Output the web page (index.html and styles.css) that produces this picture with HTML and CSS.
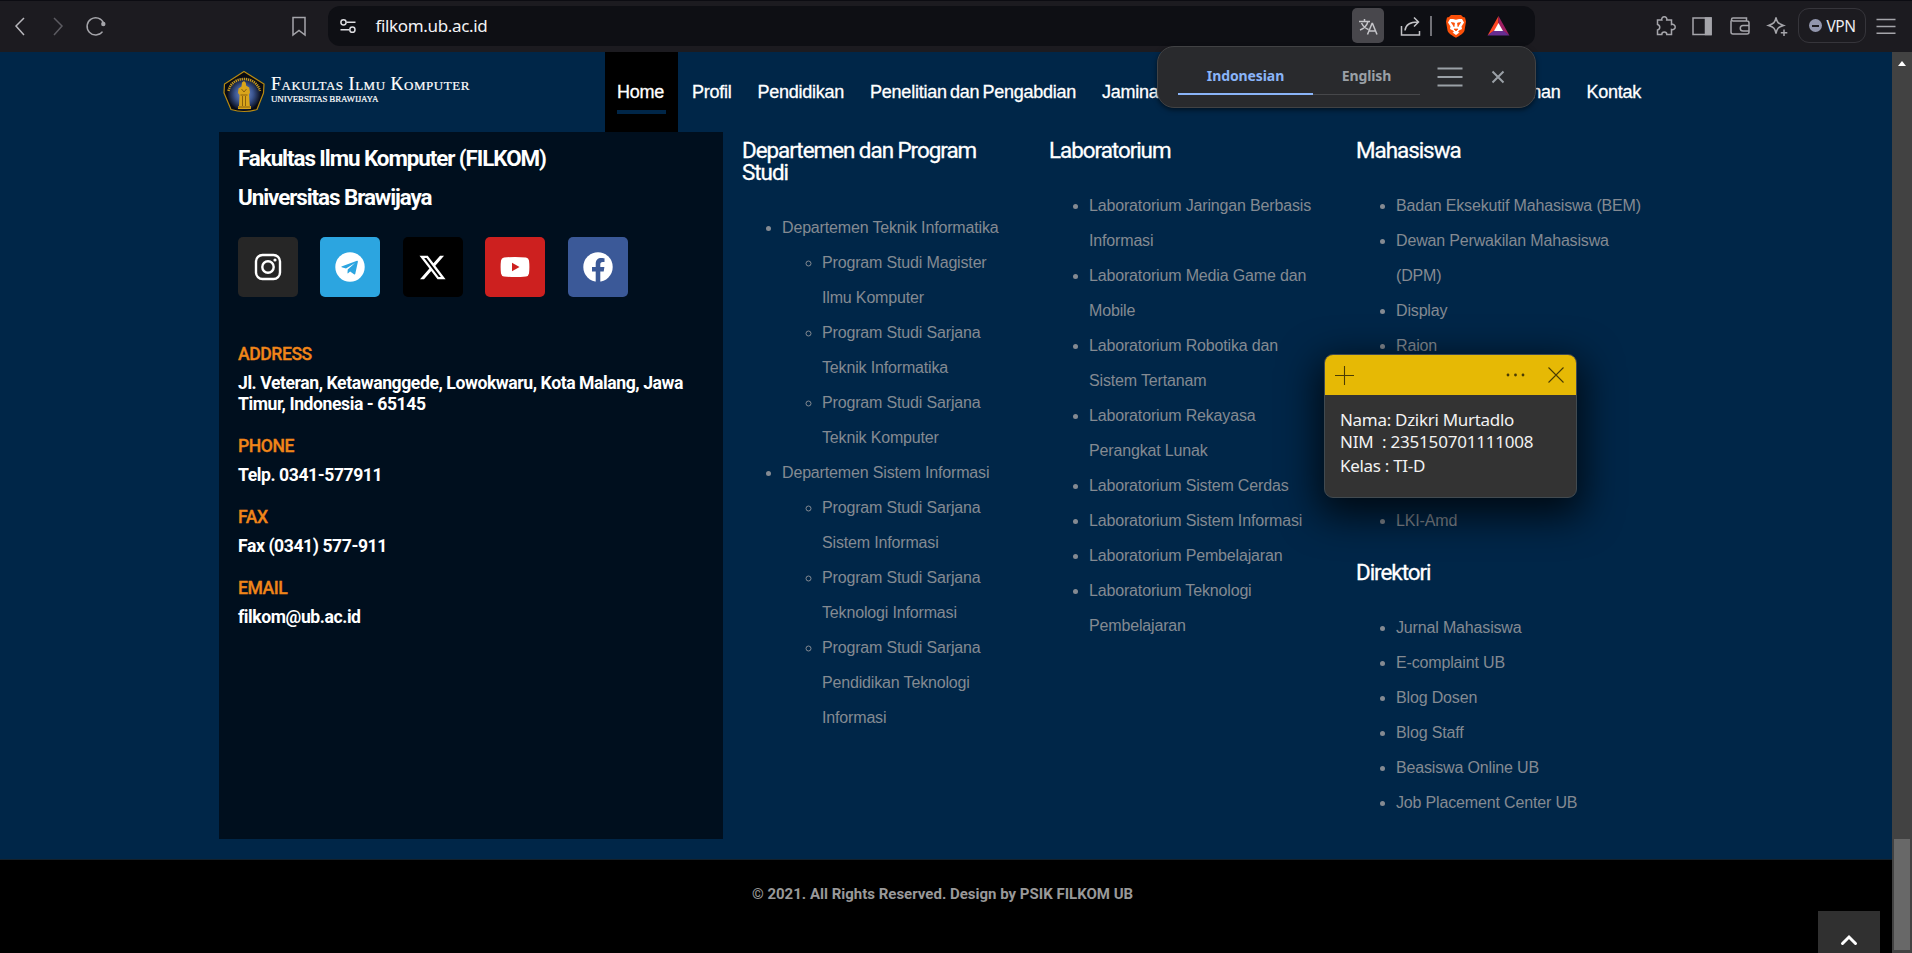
FILE: index.html
```html
<!DOCTYPE html>
<html lang="id">
<head>
<meta charset="utf-8">
<title>Fakultas Ilmu Komputer</title>
<link rel="stylesheet" href="styles.css">
</head>
<body>
<div class="toolbar">
  <svg class="ico back" viewBox="0 0 24 24"><path d="M16 4 8 12l8 9"/></svg>
  <svg class="ico forward" viewBox="0 0 24 24"><path d="M8 4l8 8-8 9"/></svg>
  <svg class="ico reload" viewBox="0 0 24 24"><path d="M19.6 9A8.6 8.6 0 1 0 18.5 17.6"/><circle cx="19.3" cy="10" r="2.2" fill="currentColor" stroke="none"/></svg>
  <svg class="ico bookmark" viewBox="0 0 24 24"><path d="M6 3.5h12V21l-6-4.5L6 21z"/></svg>
  <div class="address">
    <svg class="ico site" viewBox="0 0 24 24"><circle cx="7.5" cy="8.3" r="2.6"/><path d="M10.500 8.300h9M4.500 15.700h8.500"/><circle cx="16.400" cy="15.700" r="2.6"/></svg>
    <span class="url">filkom.ub.ac.id</span>
    <span class="translate"><svg class="ico" viewBox="0 0 24 24"><path d="M3 7.500h11M8.500 5v2.500M12 7.500C11 11 8 14.500 4 16M5.500 9c1.500 3 4 5.500 7 6.500M11.500 20.500 16 9.500h.5l4.500 11M13 17h6.500"/></svg></span>
    <svg class="ico share" viewBox="0 0 24 24"><path d="M2.500 12v9h18v-4M6 16.500C6.500 11 10 8 19 8M15 3.500 19.500 8 15 12.500"/></svg>
    <span class="divider"></span>
    <svg class="brave" viewBox="0 0 22 24"><path fill="#fb5009" d="M6 1h10l2 2 2 .5 1 4-1.500 9c-.5 2.500-5 5.500-8.500 7.300C7.500 22 3 19 2.500 16.500L1 7.500l1-4L4 3z"/><path fill="#fff" d="M5 5h3l3 .7L14 5h3l2 3.500-2.500 4L17 15l-3 1.500-1 1.500 1.500.5L11 21l-3.500-2.500L9 18l-1-1.500L5 15l.5-2.500L3 8.500z"/><path d="M6 8.500 9.500 9 9 13M16 8.500l-3.500.5.500 4M9 15h4l-2 2z" fill="#fb5009" stroke="#fb5009" stroke-width=".7"/></svg>
    <svg class="bat" viewBox="0 0 22 20"><path fill="#ff4724" d="M11 0 0 19.500 8 14l3-6z"/><path fill="#9e1f63" d="M11 0v8l3.500 6.500 7.500 5z"/><path fill="#662d91" d="M0 19.500 7 14h8l7 5.500z"/><path fill="#fff" d="M11 7l4.500 8h-9z"/></svg>
  </div>
  <svg class="ico ext" viewBox="0 0 24 24"><path d="M4.500 6h4.300a2.600 2.600 0 1 1 5 0H18.500v4.500a2.700 2.700 0 1 1 0 5V20.500h-4.700a2.500 2.500 0 0 0-5 0H4.500v-4.500a2.800 2.800 0 0 0 0-5.500z"/></svg>
  <svg class="ico" viewBox="0 0 24 24"><path d="M3 4h18v16.500H3z"/><path fill="currentColor" d="M15.500 4H21v16.500h-5.500z"/></svg>
  <svg class="ico" viewBox="0 0 24 24"><path d="M3 6.500V18a2 2 0 0 0 2 2h14a2 2 0 0 0 2-2V9a2 2 0 0 0-2-2H5A1.500 1.500 0 0 1 5 4h13.500v3M21 11.500h-6a2.500 2.500 0 0 0 0 5.500h6"/></svg>
  <svg class="ico" viewBox="0 0 24 24"><path d="M11 3.500c1 5 2 6 7.500 8-5.500 1.500-6.500 3-7.500 8-1-5-2-6.500-7.500-8 5.500-2 6.500-3 7.500-8zM19 15.500v6.500M15.800 18.700h6.500"/></svg>
  <span class="vpn"><i></i>VPN</span>
  <svg class="ico menu" viewBox="0 0 24 24"><path d="M2.500 5.500h19M2.500 12.500h19M2.500 19.200h19"/></svg>
</div>

<div class="window">
<div class="page">
  <header class="header">
    <svg class="logo" viewBox="0 0 44 44">
      <defs><radialGradient id="shield"><stop offset="0" stop-color="#7d98d6"/><stop offset=".55" stop-color="#3b558f"/><stop offset="1" stop-color="#0b1020"/></radialGradient></defs>
      <path d="M22 1.500 42 14l-.5 9L35 39.500Q22 43.500 9 39.500L2 23l.5-9z" fill="#090b12" stroke="#b78a12" stroke-width="1.200"/>
      <circle cx="22" cy="24" r="16.500" fill="url(#shield)"/>
      <path d="M6.500 21C8 13 15 9 22 9S36 13 38 21" fill="none" stroke="#c79a1c" stroke-width="2.500" stroke-dasharray="1.300 .8"/>
      <path d="M22 11l1.800 1.800.4 3 3 1.800.8 5-1 2 .5 7 .4 4.400h1v3H16v-3h1l.6-11-1.600-2 .5-4.500 3-2 .5-4z" fill="#d9a51b"/>
      <path d="M19.500 19l2.500 3 2.500-3M18.500 25h7M20.500 26v10M23.500 26v10M16 37h12" stroke="#80580c" stroke-width=".9" fill="none"/>
    </svg>
    <div class="brand"><span class="brand-name">Fakultas Ilmu Komputer</span><span class="brand-sub">UNIVERSITAS BRAWIJAYA</span></div>
    <nav class="nav">
      <a class="active"><span>Home</span></a><a>Profil</a><a>Pendidikan</a><a>Penelitian dan Pengabdian</a><a>Jaminan</a><a class="push">Layanan</a><a>Kontak</a>
    </nav>
  </header>

  <main class="columns">
    <section class="contact">
      <h2>Fakultas Ilmu Komputer (FILKOM)</h2>
      <h2>Universitas Brawijaya</h2>
      <div class="social">
        <a class="instagram"><svg viewBox="0 0 30 30"><rect x="3" y="3" width="24" height="24" rx="6.500"/><circle cx="15" cy="15" r="5.700"/><circle cx="22" cy="8" r="1.600" fill="#fff" stroke="none"/></svg></a>
        <a class="telegram"><svg viewBox="0 0 30 30"><circle cx="15" cy="15" r="14.700" fill="#fff" stroke="none"/><path fill="#2ca5e0" stroke="none" d="M6.500 14.600 22 8.700q1-.2.900 1L20.300 21.800q-.3 1-1.300.5l-3.900-2.900-2 1.900q-.5.400-.6-.3l.2-3.500 7.300-6.500-9 5.600-4.300-1.300q-.7-.4-.2-.7z"/></svg></a>
        <a class="x"><svg viewBox="0 0 24 24"><path fill="#fff" stroke="none" d="M18.244 2.250h3.308l-7.227 8.260 8.502 11.240H16.170l-5.214-6.817L4.990 21.750H1.680l7.730-8.835L1.254 2.250H8.080l4.713 6.231zm-1.161 17.520h1.833L7.084 4.126H5.117z"/></svg></a>
        <a class="youtube"><svg viewBox="0 0 30 30"><path fill="#fff" stroke="none" d="M4 5.600Q15 4.400 26 5.600q2.500.4 3 3 .8 6.400 0 12.800-.5 2.600-3 3Q15 25.600 4 24.400q-2.500-.4-3-3-.8-6.400 0-12.800.5-2.600 3-3z"/><path fill="#cd201f" stroke="none" d="M12 10.700v8.600l7.500-4.300z"/></svg></a>
        <a class="facebook"><svg viewBox="0 0 30 30"><circle cx="15" cy="15" r="14.700" fill="#fff" stroke="none"/><path fill="#3b5998" stroke="none" d="M12.700 30V19.400H9V15h3.700v-3.200c0-3.800 2.200-5.800 5.600-5.800 1.600 0 3.200.3 3.200.3v3.600h-1.800c-1.800 0-2.400 1.100-2.400 2.300V15h4.100l-.7 4.400h-3.400V30z"/></svg></a>
      </div>
      <h3>ADDRESS</h3><p>Jl. Veteran, Ketawanggede, Lowokwaru, Kota Malang, Jawa Timur, Indonesia - 65145</p>
      <h3>PHONE</h3><p>Telp. 0341-577911</p>
      <h3>FAX</h3><p>Fax (0341) 577-911</p>
      <h3>EMAIL</h3><p>filkom@ub.ac.id</p>
    </section>

    <section class="links">
      <h4>Departemen dan Program<br>Studi</h4>
      <ul>
        <li>Departemen Teknik Informatika
          <ul><li>Program Studi Magister<br>Ilmu Komputer</li><li>Program Studi Sarjana<br>Teknik Informatika</li><li>Program Studi Sarjana<br>Teknik Komputer</li></ul></li>
        <li>Departemen Sistem Informasi
          <ul><li>Program Studi Sarjana<br>Sistem Informasi</li><li>Program Studi Sarjana<br>Teknologi Informasi</li><li>Program Studi Sarjana<br>Pendidikan Teknologi<br>Informasi</li></ul></li>
      </ul>
    </section>

    <section class="links">
      <h4>Laboratorium</h4>
      <ul>
        <li>Laboratorium Jaringan Berbasis<br>Informasi</li><li>Laboratorium Media Game dan<br>Mobile</li><li>Laboratorium Robotika dan<br>Sistem Tertanam</li><li>Laboratorium Rekayasa<br>Perangkat Lunak</li><li>Laboratorium Sistem Cerdas</li><li>Laboratorium Sistem Informasi</li><li>Laboratorium Pembelajaran</li><li>Laboratorium Teknologi<br>Pembelajaran</li>
      </ul>
    </section>

    <section class="links">
      <h4>Mahasiswa</h4>
      <ul>
        <li>Badan Eksekutif Mahasiswa (BEM)</li><li>Dewan Perwakilan Mahasiswa<br>(DPM)</li><li>Display</li><li>Raion</li><li></li><li></li><li></li><li></li><li>LKI-Amd</li>
      </ul>
      <h4>Direktori</h4>
      <ul>
        <li>Jurnal Mahasiswa</li><li>E-complaint UB</li><li>Blog Dosen</li><li>Blog Staff</li><li>Beasiswa Online UB</li><li>Job Placement Center UB</li>
      </ul>
    </section>
  </main>

  <footer class="footer">© 2021. All Rights Reserved. Design by PSIK FILKOM UB</footer>
  <a class="to-top"><svg viewBox="0 0 18 12"><path d="M2.500 9.500 9 3l6.500 6.500"/></svg></a>
</div>
<div class="scrollbar"><span class="arrow"></span><span class="thumb"></span></div>
</div>

<div class="popup">
  <span class="tab selected">Indonesian</span><span class="tab">English</span>
  <svg class="popup-menu" viewBox="0 0 26 20"><path d="M.5 1.500h25M.5 10h25M.5 18.500h25"/></svg>
  <svg class="popup-close" viewBox="0 0 14 14"><path d="M1.500 1.500l11 11M12.500 1.500l-11 11"/></svg>
</div>

<div class="note">
  <div class="note-bar">
    <svg class="plus" viewBox="0 0 19 19"><path d="M9.500 0v19M0 9.500h19"/></svg>
    <svg class="dots" viewBox="0 0 20 4"><circle cx="2" cy="2" r="1.400"/><circle cx="9.500" cy="2" r="1.400"/><circle cx="17" cy="2" r="1.400"/></svg>
    <svg class="close" viewBox="0 0 16 16"><path d="M.5.500l15 15M15.500.500l-15 15"/></svg>
  </div>
  <div class="note-body"><div class="n1">Nama: Dzikri Murtadlo</div><div class="n2">NIM&nbsp; : 235150701111008</div><div class="n3">Kelas : TI-D</div></div>
</div>
</body>
</html>
```
FILE: styles.css
```css
* { box-sizing: border-box; }
html, body { margin: 0; height: 953px; overflow: hidden; }
body { background: #000; font-family: "Liberation Sans", Arial, sans-serif; position: relative; }
h2, h3, h4, p, ul { margin: 0; padding: 0; }
svg { display: block; flex: none; fill: none; }

/* browser toolbar */
.toolbar { height: 52px; background: #1c1b20; border-top: 1px solid #0c0c12; display: flex; align-items: center; padding: 0 0 2px 8px; }
.ico { width: 24px; height: 24px; color: #a5a5aa; stroke: currentColor; stroke-width: 1.5; margin-right: 13.5px; flex: none; }
.forward { color: #5c5b61; }
.back { color: #b8b7bc; margin-right: 14px; }
.reload { margin-right: 179.500px; }
.bookmark { margin-right: 16.500px; }
.address { width: 1207px; height: 40px; flex: none; border-radius: 12px; background: #0e0f14; display: flex; align-items: center; padding-left: 8px; }
.site { color: #dcdce0; margin: 0 16px 0 0; }
.url { font: 17px/24px "Noto Sans", sans-serif; letter-spacing: -.35px; color: #f2f2f4; width: 976px; flex: none; }
.translate { width: 32px; height: 35px; border-radius: 5px; background: #48474c; display: grid; place-items: center; }
.translate .ico { width: 24px; height: 24px; margin: 0; color: #c5c5c9; }
.share { margin: 0 7px 0 15px; color: #c2c2c6; }
.divider { width: 2px; height: 20px; background: #717177; }
.brave { width: 22px; height: 24px; margin-left: 13px; }
.bat { width: 23px; height: 20px; margin-left: 20px; }
.ext { margin-left: 118px; }
.vpn { width: 68px; height: 35px; margin: 0 8px 0 -5px; border: 1px solid #36353b; border-radius: 11px; display: flex; align-items: center; padding-left: 10px; gap: 5px; font: 15.5px/20px "Noto Sans", sans-serif; letter-spacing: -.5px; color: #ececef; flex: none; }
.vpn i { width: 13px; height: 13px; border-radius: 50%; background: #9296ad linear-gradient(#1c1b20, #1c1b20) center / 7px 2px no-repeat; }
.menu { margin: 0; }

/* site */
.window { display: flex; height: 901px; }
.page { width: 1892px; height: 901px; background: #002648; position: relative; display: flex; flex-direction: column; overflow: hidden; }
.header { height: 80px; display: flex; padding-left: 222px; flex: none; }
.logo { width: 44px; height: 44px; margin-top: 18px; }
.brand { width: 334px; margin: 22px 0 0 5px; display: flex; flex-direction: column; color: #fff; font-family: "Liberation Serif", serif; }
.brand-name { font-size: 18px; line-height: 20px; font-variant: small-caps; letter-spacing: .52px; white-space: nowrap; -webkit-text-stroke: .2px #fff; }
.brand-sub { font-size: 9px; line-height: 10px; letter-spacing: -.18px; -webkit-text-stroke: .2px #fff; }
.nav { width: 1036px; display: flex; color: #fff; font-size: 18px; letter-spacing: -.25px; word-spacing: -1.5px; line-height: 80px; -webkit-text-stroke: .3px #fff; white-space: nowrap; }
.nav a { margin-left: 26px; }
.nav a.active { width: 73px; margin: 0 -12px 0 0; padding-left: 12px; background: #000; }
.nav a.active span { display: block; width: 49px; height: 62px; border-bottom: 4px solid #002648; }
.nav a.push { margin-left: auto; }
.columns { height: 727px; display: flex; padding-left: 219px; flex: none; }
.contact { width: 504px; height: 707px; background: #000f1e; padding: 7px 19px 0; color: #fff; font-family: Roboto, sans-serif; font-weight: 700; }
.contact h2 { font-size: 22.4px; line-height: 39px; letter-spacing: -1.07px; }
.social { display: flex; gap: 22.4px; margin: 20px 0 47px; }
.social a { width: 60px; height: 60px; border-radius: 5px; display: grid; place-items: center; }
.social svg { width: 30px; height: 30px; stroke: #fff; stroke-width: 2.4; }
.social .x svg { width: 29px; height: 29px; }
.instagram { background: #262626; }
.telegram { background: #2ca5e0; }
.x { background: #000; }
.youtube { background: #cd201f; }
.facebook { background: #3b5998; }
.contact h3 { font-size: 17.6px; line-height: 21px; font-weight: 500; letter-spacing: -.45px; color: #f08519; -webkit-text-stroke: .3px #f08519; margin-bottom: 8px; }
.contact p { font-size: 17.6px; line-height: 21px; letter-spacing: -.43px; margin-bottom: 21px; }
.links { width: 307px; padding: 7px 0 0 19px; color: #848a92; font-size: 16px; line-height: 35px; letter-spacing: -.16px; white-space: nowrap; }
.links h4 { font: 400 22.4px/22.4px Roboto, sans-serif; letter-spacing: -1.02px; color: #fff; -webkit-text-stroke: .3px #fff; margin-bottom: 26.2px; }
.links ul { padding-left: 40px; margin-bottom: 23.600px; }
.links ul ul { margin: 0; }
.links li { min-height: 35px; }
.links li:empty { list-style: none; }
.footer { flex: 1; background: #000; border-top: 1px solid #14202a; text-align: center; padding: 23px 7px 0 0; color: #999; font: 700 15px/22px Roboto, sans-serif; }
.to-top { position: absolute; right: 12px; bottom: 0; width: 62px; height: 42px; background: #303030; }
.to-top svg { width: 18px; height: 12px; margin: 23px 0 0 22px; stroke: #fff; stroke-width: 3; stroke-linecap: round; }
.scrollbar { width: 20px; background: #424242; display: flex; flex-direction: column; align-items: center; padding-top: 9px; }
.arrow { border: 4px solid transparent; border-top: 0; border-bottom: 5px solid #fff; }
.thumb { width: 16px; height: 111px; background: #686868; margin-top: 773px; }

/* translate popup */
.popup { position: absolute; left: 1157px; top: 46px; width: 379px; height: 62px; border-radius: 17px; background: #292a2d; border: 1px solid #414244; box-shadow: 0 2px 5px #0008; display: flex; align-items: flex-start; padding: 9px 0 0 20px; }
.tab { width: 107px; height: 39px; border-bottom: 1px solid #46474a; text-align: center; color: #9aa0a6; font: 700 14px/40px "Noto Sans", sans-serif; letter-spacing: -.1px; }
.tab.selected { width: 135px; color: #8ab4f8; border-bottom: 2px solid #8ab4f8; }
.popup svg { stroke: #9aa0a6; stroke-width: 2; }
.popup-menu { width: 26px; height: 20px; margin: 11px 28px 0 17px; }
.popup-close { width: 14px; height: 14px; margin-top: 14px; }

/* sticky note */
.note { position: absolute; left: 1324px; top: 354px; width: 253px; height: 144px; border: 1px solid #414a50; border-radius: 9px; background: #333; overflow: hidden; box-shadow: 0 12px 38px 6px #000b; }
.note-bar { height: 40px; background: #e6b905; display: flex; align-items: center; padding: 0 12px 0 10px; }
.note-bar svg { stroke: #4a3c05; stroke-width: 1.1; }
.plus { width: 19px; height: 19px; }
.note-bar .dots { width: 20px; height: 4px; margin: 0 22px 0 auto; fill: #4a3c05; stroke: none; }
.close { width: 16px; height: 16px; }
.note-body { padding: 13px 0 0 15px; color: #f2f2f2; font: 17px/24px "Noto Sans", sans-serif; letter-spacing: -.3px; white-space: nowrap; }
.n2 { margin-top: -2px; letter-spacing: -.2px; }
```
